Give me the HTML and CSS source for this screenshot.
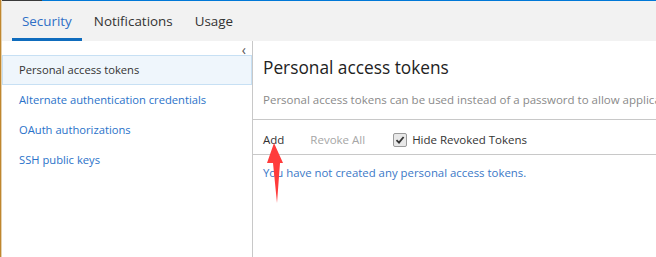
FILE: index.html
```html
<!DOCTYPE html>
<html lang="en">
<head>
    <meta charset="UTF-8">
    <title>Security - Personal access tokens</title>
    <link rel="stylesheet" href="styles.css">
</head>
<body>
    <div class="window">
        <div class="window-edge"></div>
        <div class="page">
            <div class="top-line"></div>
            <div class="hub-header">
                <div class="hub-tab selected">Security</div>
                <div class="hub-tab">Notifications</div>
                <div class="hub-tab">Usage</div>
            </div>
            <div class="hub-body">
                <div class="left-pane">
                    <div class="collapse">&lsaquo;</div>
                    <ul class="nav-list">
                        <li class="nav-item selected">Personal access tokens</li>
                        <li class="nav-item">Alternate authentication credentials</li>
                        <li class="nav-item">OAuth authorizations</li>
                        <li class="nav-item">SSH public keys</li>
                    </ul>
                </div>
                <div class="content">
                    <div class="content-header">
                        <div class="title">Personal access tokens</div>
                        <div class="description">Personal access tokens can be used instead of a password to allow applications to access your account.</div>
                    </div>
                    <div class="toolbar">
                        <span class="tool-item">Add</span>
                        <span class="tool-item disabled">Revoke All</span>
                        <label class="tool-check">
                            <span class="checkbox">
                                <svg viewBox="0 0 12 12" width="12" height="12">
                                    <path d="M2.5 6.2 L5 8.6 L9.6 3" stroke="#333" stroke-width="1.8" fill="none"/>
                                </svg>
                            </span>
                            Hide Revoked Tokens
                        </label>
                    </div>
                    <div class="empty-message">You have not created any personal access tokens.</div>

                    <!-- annotation arrow -->
                    <svg class="arrow-mark" width="20" height="60" viewBox="0 0 20 60">
                        <polygon points="7,0 0,20 6,20 10,60 13,20 16,20" fill="#ff3b3b"/>
                    </svg>
                </div>
            </div>
        </div>
    </div>
</body>
</html>
```

FILE: styles.css
```css
html, body {
    margin: 0;
    padding: 0;
    width: 656px;
    height: 257px;
    overflow: hidden;
    background-color: white;
    font-family: "Open Sans", "Noto Sans", sans-serif;
}
.window {
    display: flex;
    height: 257px;
}
.window-edge {
    width: 2px;
    flex-shrink: 0;
    background-color: #c0862e;
    border-right: 1px solid #e4d2b0;
    box-sizing: border-box;
}
.page {
    flex-grow: 1;
    display: flex;
    flex-direction: column;
    min-width: 0;
}
.top-line {
    height: 1px;
    background: linear-gradient(to right, #3a3a3a 40px, #0078d7 40px);
}
.hub-header {
    height: 40px;
    background-color: #f2f2f2;
    display: flex;
    padding-left: 10px;
    gap: 2px;
}
.hub-tab {
    padding: 0 10px;
    font-size: 13.4px;
    line-height: 41px;
    color: #333;
    box-sizing: border-box;
    height: 40px;
}
.hub-tab.selected {
    color: #2f6fc6;
    border-bottom: 3px solid #0f6cbd;
}
.hub-body {
    flex-grow: 1;
    display: flex;
}
.left-pane {
    width: 251px;
    flex-shrink: 0;
    border-right: 1px solid #c8c8c8;
    box-sizing: border-box;
}
.collapse {
    height: 14px;
    text-align: right;
    padding-right: 6px;
    font-size: 14px;
    line-height: 17px;
    color: #555;
}
.nav-list {
    list-style-type: none;
    margin: 0;
    padding: 0;
}
.nav-item {
    height: 30px;
    line-height: 28px;
    padding-left: 16px;
    font-size: 11.2px;
    color: #2a72c9;
    border: 1px solid transparent;
    box-sizing: border-box;
    white-space: nowrap;
}
.nav-item.selected {
    background-color: #eff6fc;
    border-color: #c7e0f4;
    color: #333;
}
.content {
    flex-grow: 1;
    min-width: 0;
    position: relative;
}
.content-header {
    padding: 0 0 0 10px;
    height: 78px;
    border-bottom: 1px solid #c8c8c8;
}
.title {
    font-size: 17.3px;
    color: #222;
    padding-top: 14px;
    line-height: 26px;
    white-space: nowrap;
}
.description {
    font-size: 11.5px;
    color: #8a8a8a;
    margin-top: 11px;
    line-height: 16px;
    white-space: nowrap;
    overflow: hidden;
}
.toolbar {
    height: 35px;
    display: flex;
    align-items: center;
    padding: 5px 0 0 10px;
    box-sizing: border-box;
    gap: 26px;
    font-size: 11.5px;
    border-bottom: 1px solid #c8c8c8;
}
.tool-item {
    color: #333;
}
.tool-item.disabled {
    color: #a6a6a6;
}
.tool-check {
    display: flex;
    align-items: center;
    gap: 5px;
    color: #333;
    margin-left: 2px;
}
.checkbox {
    width: 12px;
    height: 12px;
    border: 1px solid #9a9a9a;
    border-radius: 2px;
    background-color: #e8e8e8;
    display: flex;
}
.empty-message {
    padding-left: 10px;
    margin-top: 9px;
    font-size: 11.4px;
    line-height: 18px;
    color: #3b78c7;
}
.arrow-mark {
    position: absolute;
    left: 14px;
    top: 102px;
}
```
